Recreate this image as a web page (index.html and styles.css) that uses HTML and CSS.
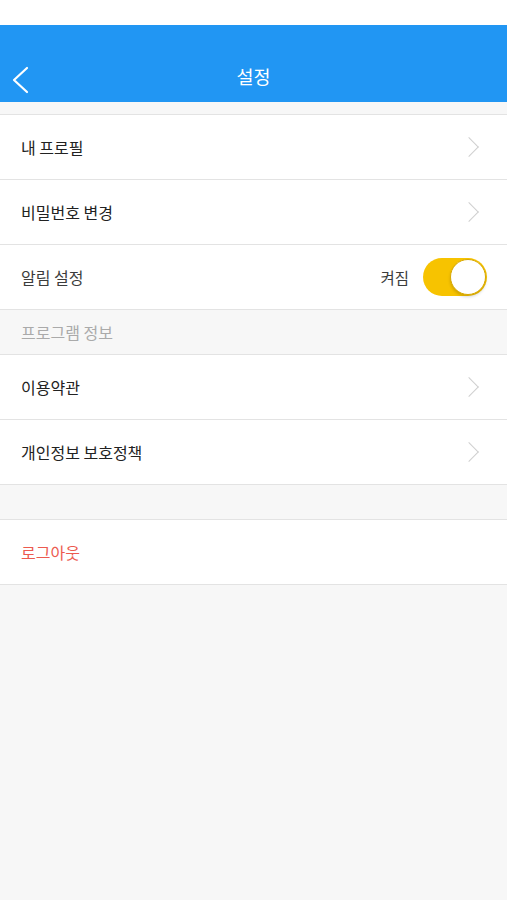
FILE: index.html
```html
<!DOCTYPE html>
<html>
<head>
    <meta charset="UTF-8">
    <title>설정</title>
    <link rel="stylesheet" href="styles.css">
    <meta name="viewport" content="width=device-width, initial-scale=1">
</head>
<body>
    <div class="status-bar"></div>
    <header class="top-bar">
        <button class="back-button" aria-label="뒤로">
            <svg width="18" height="28" viewBox="0 0 18 28">
                <polyline points="15,2 2,14 15,26" fill="none" stroke="#fff" stroke-width="2.2" stroke-linecap="round" stroke-linejoin="round"/>
            </svg>
        </button>
        <h1 class="title">설정</h1>
    </header>

    <div class="spacer small"></div>

    <ul class="group">
        <li class="row">
            <span class="label">내 프로필</span>
            <span class="chevron"></span>
        </li>
        <li class="row">
            <span class="label">비밀번호 변경</span>
            <span class="chevron"></span>
        </li>
        <li class="row">
            <span class="label light">알림 설정</span>
            <span class="state">켜짐</span>
            <span class="switch on"><span class="knob"></span></span>
        </li>
        <li class="section">프로그램 정보</li>
        <li class="row">
            <span class="label">이용약관</span>
            <span class="chevron"></span>
        </li>
        <li class="row">
            <span class="label">개인정보 보호정책</span>
            <span class="chevron"></span>
        </li>
    </ul>

    <div class="spacer large"></div>

    <ul class="group">
        <li class="row">
            <span class="label logout">로그아웃</span>
        </li>
    </ul>
</body>
</html>
```

FILE: styles.css
```css
body {
    margin: 0;
    background-color: #f7f7f7;
    font-family: 'Noto Sans CJK KR', 'Noto Sans', sans-serif;
    color: #333;
}

.status-bar {
    height: 25px;
    background-color: #fff;
}

.top-bar {
    height: 77px;
    background-color: #2196f3;
    display: flex;
    align-items: center;
    justify-content: center;
    position: relative;
}

.back-button {
    position: absolute;
    left: 12px;
    top: 41px;
    padding: 0;
    border: none;
    background: none;
    display: flex;
}

.title {
    margin: 24px 0 0;
    font-size: 18.5px;
    font-weight: normal;
    color: #fff;
}

.spacer.small {
    height: 12px;
}

.spacer.large {
    height: 34px;
}

.group {
    list-style: none;
    margin: 0;
    padding: 0;
    border-top: 1px solid #e3e3e3;
}

.row {
    height: 64px;
    background-color: #fff;
    border-bottom: 1px solid #e3e3e3;
    display: flex;
    align-items: center;
    padding: 0 20px 0 21px;
}

.label {
    flex: 1;
    font-size: 16px;
    color: #222;
}

.label.light {
    color: #3c3c3c;
}

.label.logout {
    color: #ec5a4f;
}

.chevron {
    width: 13px;
    height: 13px;
    border-top: 1.5px solid #cfcfcf;
    border-right: 1.5px solid #cfcfcf;
    transform: rotate(45deg);
    margin-right: 11px;
}

.state {
    font-size: 15.5px;
    color: #3c3c3c;
    margin-right: 14px;
}

.switch {
    width: 64px;
    height: 38px;
    border-radius: 19px;
    background-color: #f7c300;
    display: flex;
    align-items: center;
    justify-content: flex-end;
    box-sizing: border-box;
    padding-right: 1px;
}

.knob {
    width: 34px;
    height: 34px;
    border-radius: 50%;
    background-color: #fff;
    border: 1px solid #d8a800;
    box-shadow: 0 2px 3px rgba(0, 0, 0, 0.15);
}

.section {
    height: 44px;
    border-bottom: 1px solid #e3e3e3;
    display: flex;
    align-items: center;
    padding-left: 21px;
    font-size: 16px;
    color: #aaa;
}
```
